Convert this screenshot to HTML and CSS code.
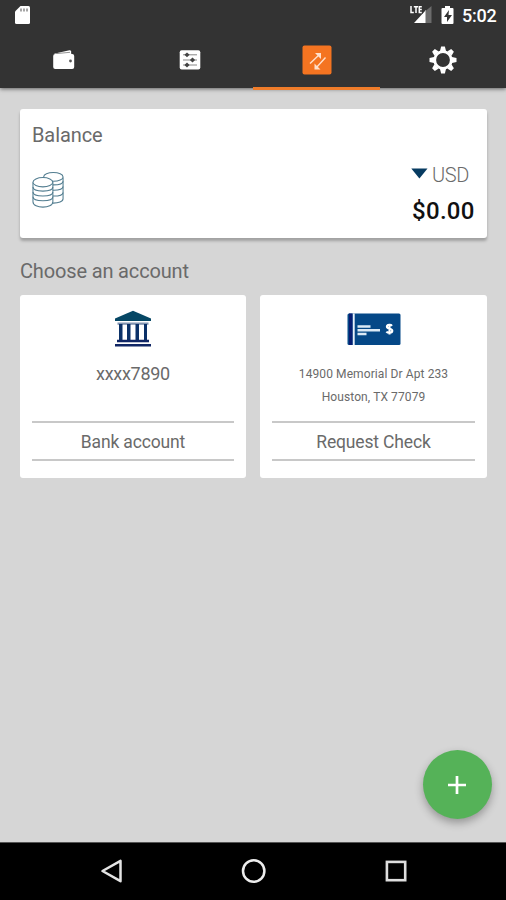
FILE: index.html
```html
<!DOCTYPE html>
<html lang="en">
<head>
<meta charset="utf-8">
<title>Transfer</title>
<link rel="stylesheet" href="styles.css">
</head>
<body>
<div class="screen">
  <header class="top">
    <div class="status">
      <svg class="sd" width="17" height="20" viewBox="0 0 17 20"><path d="M6.500 1H14.500Q16 1 16 2.500V17.500Q16 19 14.500 19H2.500Q1 19 1 17.500V6.500Z" fill="#fff"/><path d="M7 3.500v3M10 3.500v3M13 3.500v3" stroke="#777" stroke-width="1.300"/></svg>
      <div class="status-right">
        <svg width="22" height="20" viewBox="0 0 22 20"><path d="M4 18L16 5V18Z" fill="#fff"/><path d="M15.500 6L21.500 1V18H15.500Z" fill="#6c6c6c"/><path d="M0 0h12.500v9H0z" fill="#333"/><path d="M1 1v6.500h2.800M3.800 1.700h4.200M6 1.700v6.400M11.800 1.700H9.300v5.800h2.500M9.300 4.600h2.500" fill="none" stroke="#fff" stroke-width="1.500"/></svg>
        <svg class="battery" width="13" height="20" viewBox="0 0 13 20"><path d="M4 1h5v2h2.500q1 0 1 1v14q0 1-1 1h-10q-1 0-1-1V4q0-1 1-1H4Z" fill="#fff"/><path d="M8 5L3 12h3v5l5-7H7.500Z" fill="#333"/></svg>
        <span class="time">5:02</span>
      </div>
    </div>
    <nav class="tabs">
      <div class="tab"><svg width="24" height="22" viewBox="0 0 24 22"><path d="M3 4.500L17.500 1.200Q18.800 1 19 2.300L19.300 5H2Z" fill="#fff"/><path d="M3.500 4.700L18 3.300" stroke="#777" stroke-width=".8"/><rect x="1.200" y="5" width="21" height="15" rx="2" fill="#fff"/><circle cx="18.500" cy="12" r="1.400" fill="#555"/></svg></div>
      <div class="tab"><svg width="22" height="22" viewBox="0 0 22 22"><rect x=".7" y="1.200" width="20.600" height="19.300" rx="2" fill="#fff"/><path d="M4 5.800h14M4 11h14M4 16h14" stroke="#888"/><path d="M8 3.500l2.600 2.300L8 8.200 5.400 5.800zM13.500 8.600l2.600 2.400-2.600 2.400-2.600-2.400zM8 13.600l2.600 2.400L8 18.400 5.400 16z" fill="#444"/></svg></div>
      <div class="tab active"><svg width="30" height="30" viewBox="0 0 30 30"><rect x=".5" y=".5" width="29" height="29" rx="2" fill="#f47421"/><g fill="none" stroke="#ffe0cc" stroke-width="1.400"><path d="M8 18.500L18 9M23.500 12.500L14 23"/></g><path d="M13 8h6v6zM12.500 18.500v6h6z" fill="#ffe0cc"/></svg></div>
      <div class="tab"><svg width="28" height="28" viewBox="-14 -14 28 28"><g fill="#fff"><g id="teeth"><path id="tooth" d="M-3-9L-1.900-13.500H1.900L3-9Z"/><use href="#tooth" transform="rotate(90)"/><use href="#tooth" transform="rotate(180)"/><use href="#tooth" transform="rotate(270)"/></g><use href="#teeth" transform="rotate(45)"/></g><circle r="8.300" fill="#333" stroke="#fff" stroke-width="2.800"/></svg></div>
    </nav>
  </header>

  <main class="content">
    <section class="card balance">
      <h2 class="label balance-label">Balance</h2>
      <div class="balance-row">
        <svg width="33" height="38" viewBox="0 0 34 38" fill="#fff" stroke="#527d90" stroke-width="1.100">
          <path d="M12 6v22c0 6 20 6 20 0V6"/><path d="M12 10c0 5 20 5 20 0M12 15.500c0 5 20 5 20 0M12 21.500c0 5 20 5 20 0" fill="none"/><ellipse cx="22" cy="5.500" rx="10" ry="4.500"/>
          <path d="M1 11v20c0 7.500 20.500 7.500 20.500 0V11"/><path d="M1 16c0 5.500 20.500 5.500 20.500 0M1 21c0 5.500 20.500 5.500 20.500 0M1 26c0 5.500 20.500 5.500 20.500 0" fill="none"/><ellipse cx="11.200" cy="11" rx="10.200" ry="4.800"/>
        </svg>
        <div class="amount">
          <div class="currency"><svg width="17" height="11" viewBox="0 0 17 11"><path d="M.3.500H16.500L8.400 10.500Z" fill="#073b61"/></svg><span>USD</span></div>
          <div class="sum">$0.00</div>
        </div>
      </div>
    </section>
    <h2 class="label choose">Choose an account</h2>
    <div class="accounts">
      <section class="card account">
        <svg class="pic" width="38" height="38" viewBox="0 0 38 38"><path d="M19 .8L37 8.500V11H1V8.500Z" fill="#064765"/><path d="M3.500 12.500h31v2.300h-31z" fill="#8294b0"/><path d="M5 14h3.500v16H5zM13 14h3.500v16H13zM21.500 14H25v16h-3.500zM30 14h3v16h-3z" fill="#0b3168"/><path d="M3 29.800h32v2.500H3zM1 34h36v2.500H1z" fill="#102665"/></svg>
        <div class="details"><p class="number">xxxx7890</p></div>
        <div class="action bank">Bank account</div>
      </section>
      <section class="card account">
        <svg class="pic" width="54" height="38" viewBox="0 0 54 38"><rect x=".5" y="3.500" width="53" height="31.500" rx="1.500" fill="#054887"/><path d="M2 3.500h3.500V35H2z" fill="#071d72"/><path d="M5.800 3.500h1.900V35H5.800z" fill="#e8f1fa"/><path d="M10.500 16.500h13M10.500 20.200h22.500M10.500 24h9" stroke="#dceaf6" stroke-width="2.400"/><path d="M45 15.800c-1.100-1.400-5.100-1.400-5.100 1 0 2.700 5.400 1.400 5.400 4 0 2.500-4.500 2.500-5.900.8M42.500 13.800v10.600" fill="none" stroke="#fff" stroke-width="2.100"/></svg>
        <div class="details address"><p>14900 Memorial Dr Apt 233</p><p class="city">Houston, TX 77079</p></div>
        <div class="action request">Request Check</div>
      </section>
    </div>
    <div class="fab"><svg width="20" height="20" viewBox="0 0 20 20"><path d="M10 1v18M1 10h18" stroke="#fff" stroke-width="2.700"/></svg></div>
  </main>

  <footer class="navbar">
    <svg width="24" height="26" viewBox="0 0 24 26"><path d="M2.500 12L20.500 1.800V22.200Z" fill="none" stroke="#e4e4e4" stroke-width="2.500" stroke-linejoin="round"/></svg>
    <svg width="26" height="26" viewBox="0 0 26 26"><circle cx="12.700" cy="12" r="10.700" fill="none" stroke="#ededed" stroke-width="2.500"/></svg>
    <svg width="24" height="26" viewBox="0 0 24 26"><rect x="2.900" y="2.900" width="18.300" height="18.300" fill="none" stroke="#dedede" stroke-width="2.600"/></svg>
  </footer>
</div>
</body>
</html>
```

FILE: styles.css
```css
* { box-sizing: border-box; }
body { margin: 0; font-family: Roboto, sans-serif; color: #6a6a6a; }
h2, p { margin: 0; font-weight: 400; }
svg { display: block; flex: none; }
.screen { width: 506px; height: 900px; display: flex; flex-direction: column; background: #d6d6d6; overflow: hidden; }
.top { height: 88px; background: #333; box-shadow: 0 1px 4px rgba(0,0,0,.55); z-index: 1; }
.status { height: 30px; display: flex; justify-content: space-between; align-items: flex-start; padding: 5px 9px 0 14px; }
.status-right { display: flex; }
.battery { margin-left: 9px; }
.time { margin-left: 8px; width: 35px; font-size: 18px; line-height: 22px; font-weight: 500; color: #fff; white-space: nowrap; letter-spacing: -.2px; }
.tabs { display: grid; grid-template-columns: repeat(4, 1fr); height: 60px; }
.tab { display: flex; align-items: center; justify-content: center; border-bottom: 3px solid transparent; padding: 2px 0 0 1px; }
.tab.active { border-color: #ef7c2a; }
.content { flex: 1; padding: 21px 19px 0 20px; position: relative; }
.card { background: #fff; border-radius: 3px; }
.balance { height: 129px; padding: 13px 12px 0; box-shadow: 0 3px 3px rgba(0,0,0,.25); }
.label { font-size: 20px; line-height: 26px; letter-spacing: -.15px; }
.balance-label { letter-spacing: -.1px; }
.balance-row { display: flex; justify-content: space-between; margin-top: 15px; }
.balance-row > svg { margin-top: 8px; }
.amount { width: 64px; }
.currency { display: flex; align-items: center; gap: 4px; font-size: 20px; line-height: 24px; font-weight: 300; letter-spacing: -.4px; }
.currency svg { margin-top: -3px; }
.sum { font-size: 24px; line-height: 30px; font-weight: 500; color: #111; margin: 9px 0 0 1px; letter-spacing: .3px; white-space: nowrap; }
.choose { margin-top: 20px; height: 37px; }
.accounts { display: grid; grid-template-columns: 226px 227px; gap: 14px; }
.account { height: 183px; padding: 15px 12px 0; display: flex; flex-direction: column; align-items: center; }
.details { height: 73px; padding-top: 14px; text-align: center; }
.number { font-size: 18px; line-height: 24px; letter-spacing: -.3px; }
.address { font-size: 12px; line-height: 24px; letter-spacing: .1px; white-space: nowrap; }
.city { line-height: 23px; }
.action { align-self: stretch; height: 40px; border-top: 2px solid #c8c8c8; border-bottom: 2px solid #c8c8c8; text-align: center; font-size: 17.5px; line-height: 38px; letter-spacing: -.15px; }
.fab { position: absolute; right: 14.5px; bottom: 23px; width: 69px; height: 69px; border-radius: 50%; background: #55b258; display: flex; align-items: center; justify-content: center; box-shadow: 0 4px 8px rgba(0,0,0,.3); }
.navbar { height: 58px; background: #000; border-top: 1px solid #555; display: flex; justify-content: space-between; align-items: center; padding: 0 98px 0 100px; }
```
